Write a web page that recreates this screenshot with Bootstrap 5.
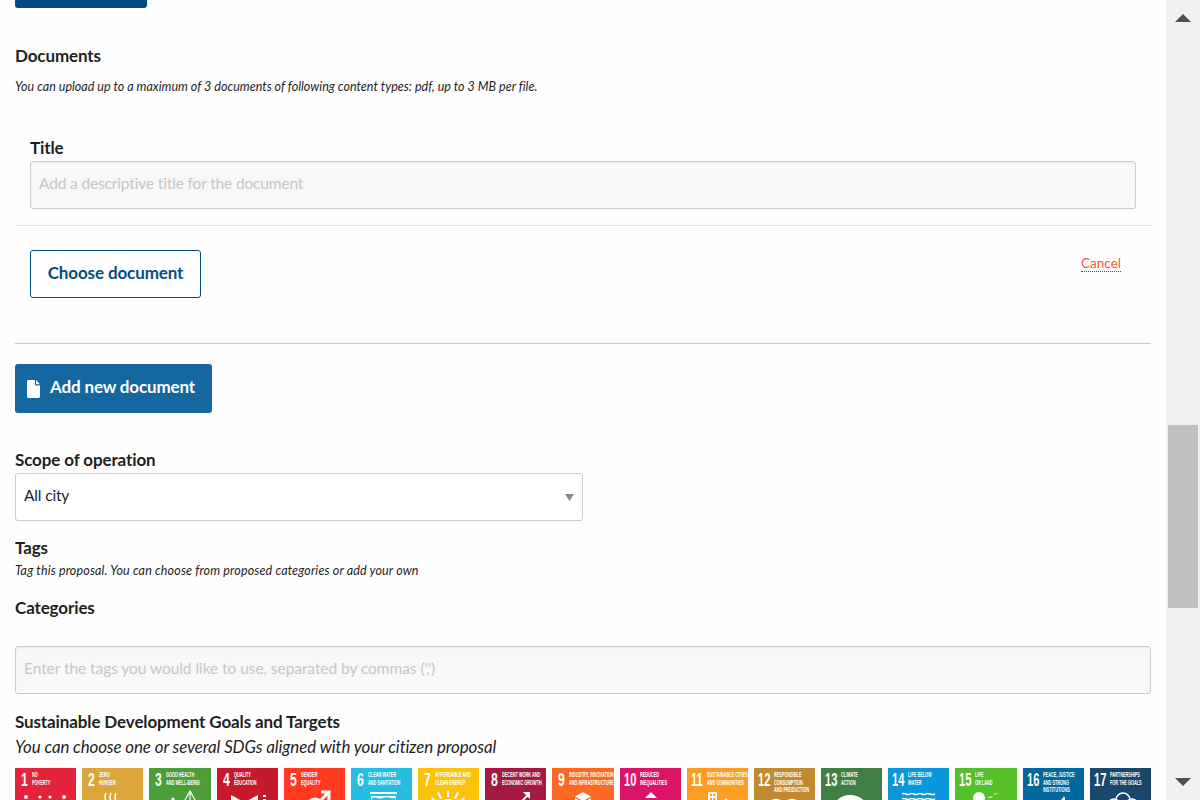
<!DOCTYPE html>
<html lang="en">
<head>
<meta charset="utf-8">
<title>New proposal</title>
<link href="https://cdn.jsdelivr.net/npm/bootstrap@5.3.0/dist/css/bootstrap.min.css" rel="stylesheet">
<script src="https://cdn.jsdelivr.net/npm/bootstrap@5.3.0/dist/js/bootstrap.bundle.min.js"></script>
<style>
html,body{height:800px;overflow:hidden}
body{background:#fefefe;color:#1f1f1f;font-family:Lato,"Liberation Sans",sans-serif;font-size:16px}
.shell{height:800px;overflow:hidden}
.pagecol{width:1166px;padding:0 15px;overflow:hidden;flex:none}
.cutbtn{width:132px;height:8px;background:#004a83;border-radius:0 0 3px 3px}
.flabel{display:block;font-weight:700;font-size:17px;line-height:24px;margin:0;letter-spacing:-.12px}
.hint{font-style:italic;font-size:12.5px;line-height:20px;margin:0;letter-spacing:.02px}
.hint.tagshint{letter-spacing:.15px;padding-top:1px;margin-bottom:-1px}
.docname{margin-top:36px}
.hintdoc{margin-top:9px;margin-bottom:-1px}
.docgroup{padding:0 15px;margin-top:40px}
.field{height:48px;border:1px solid #ccc;border-radius:3px;background:#f8f8f8;box-shadow:inset 0 1px 2px rgba(0,0,0,.06);padding:0 8px 5px;font-size:15.5px;color:#222;letter-spacing:-.15px;margin-top:1px;font-family:inherit}
.field::placeholder{color:#c6c6c6;opacity:1}
.field:focus{background:#f8f8f8;border-color:#ccc;box-shadow:none}
.catfield.field{letter-spacing:-.06px}
.rule1{margin:16px 0 0;border:0;border-top:1px solid #e2e2e2;opacity:1}
.rule2{margin:45px 0 0;border:0;border-top:1px solid #cacaca;opacity:1}
.docactions{padding:24px 30px 0 15px}
.btn-outline-doc{height:48px;width:171px;border:1px solid #004f80;border-radius:3px;color:#004f80;background:#fff;font-weight:700;font-size:17px;padding:0 0 2px;letter-spacing:-.12px}
.cancel-link{font-size:13.5px;line-height:16px;color:#f4553c;text-decoration:none;border-bottom:1px dotted #f00;margin-top:5px}
.btn-adddoc{height:49px;width:197px;background:#14679f;color:#fff;border:0;border-radius:3px;font-weight:700;font-size:17px;padding:0 0 0 12px;margin-top:20px;gap:10px;letter-spacing:-.15px}
.btn-adddoc:hover{background:#14679f;color:#fff}
.addtext{padding-bottom:4px}
.scopelabel{margin-top:35px}
.scopesel{width:568px;height:48px;margin-top:1px;border:1px solid #ccc;border-radius:3px;background-color:#fff;padding:0 8px 2px;font-size:15.5px;letter-spacing:-.15px;color:#222;font-family:inherit;background-image:url("data:image/svg+xml,%3Csvg xmlns='http://www.w3.org/2000/svg' width='9' height='7'%3E%3Cpath d='M0 0h9L4.500 7z' fill='%23888'/%3E%3C/svg%3E");background-size:9px 7px;background-position:right 8px center}
.tagslabel{margin-top:15px}
.catlabel{margin-top:16px}
.catfield{margin-top:26px}
.sdglabel{margin-top:16px}
.sdghint{font-style:italic;font-size:16.9px;line-height:24px;margin:1px 0 0;letter-spacing:-.1px}
.sdggrid{display:grid;grid-template-columns:repeat(17,1fr);column-gap:6px;margin-top:9px}
.sdgtile{height:62px;color:#fff;overflow:hidden}
.sdgtop{height:22px;display:flex;padding:2px 0 0 4px;font-family:"Liberation Sans",sans-serif}
.sdgnum{font-size:18px;line-height:20px;font-weight:700;transform:scaleX(.68);transform-origin:left;width:11px;margin-left:2px;flex:none}
.sdgnum.two{width:16px;margin-left:0;transform:scaleX(.62)}
.sdgcap{font-size:7px;line-height:7.5px;font-weight:700;text-transform:uppercase;padding-top:1px;white-space:nowrap;transform:scaleX(.55);transform-origin:left;width:40px;flex:none}
.sdgico{display:block;width:61px;height:40px}
.sbar{width:34px;background:#f0f0f0;flex:none;padding-top:14px}
.sarrow{width:16px;height:8px;margin-left:9px;display:block;fill:#505050}
.sthumb{width:30px;height:183px;background:#c1c1c1;margin:403px 0 0 2px}
.sarrow.lower{margin-top:170px}
</style>
</head>
<body>
<div class="shell d-flex">
  <main class="pagecol">
    <div class="cutbtn"></div>
    <label class="flabel docname">Documents</label>
    <p class="hint hintdoc">You can upload up to a maximum of 3 documents of following content types: pdf, up to 3 MB per file.</p>
    <div class="docgroup">
      <label class="flabel" for="doctitle">Title</label>
      <input id="doctitle" class="form-control field" placeholder="Add a descriptive title for the document">
    </div>
    <hr class="rule1">
    <div class="docactions d-flex justify-content-between align-items-start">
      <button class="btn btn-outline-doc" type="button">Choose document</button>
      <a class="cancel-link" href="#">Cancel</a>
    </div>
    <hr class="rule2">
    <button class="btn btn-adddoc d-flex align-items-center" type="button">
      <svg width="13" height="18" viewBox="0 0 13 18" aria-hidden="true"><path d="M0 1.500C0 .7.7 0 1.500 0H8v4.500c0 .6.4 1 1 1h4V16.500c0 .8-.7 1.500-1.500 1.500h-10C.7 18 0 17.300 0 16.500zM9 0l4 4.300H9z" fill="#fff"/></svg>
      <span class="addtext">Add new document</span>
    </button>
    <label class="flabel scopelabel" for="scope">Scope of operation</label>
    <select id="scope" class="form-select scopesel"><option>All city</option></select>
    <label class="flabel tagslabel">Tags</label>
    <p class="hint tagshint">Tag this proposal. You can choose from proposed categories or add your own</p>
    <label class="flabel catlabel">Categories</label>
    <input class="form-control field catfield" placeholder="Enter the tags you would like to use, separated by commas (',')">
    <label class="flabel sdglabel">Sustainable Development Goals and Targets</label>
    <p class="sdghint">You can choose one or several SDGs aligned with your citizen proposal</p>
    <div class="sdggrid">
      <div class="sdgtile" style="background:#e5243b"><div class="sdgtop"><span class="sdgnum">1</span><span class="sdgcap">No<br>poverty</span></div><svg class="sdgico" viewBox="0 0 61 40" fill="#fff"><circle cx="11" cy="7" r="2"/><circle cx="25" cy="7" r="1.600"/><circle cx="35" cy="7" r="1.600"/><circle cx="49" cy="7" r="2"/><path d="M8 10h6v8H8zM23 10h4v8h-4zM33 10h4v8h-4zM46 10h6v8h-6z"/></svg></div>
      <div class="sdgtile" style="background:#dda63a"><div class="sdgtop"><span class="sdgnum">2</span><span class="sdgcap">Zero<br>hunger</span></div><svg class="sdgico" viewBox="0 0 61 40" fill="none" stroke="#fff" stroke-width="1.500"><path d="M24 3c-2 4-1 7 1 10M29 3c-2 4-1 7 1 10M34 3c-2 4-1 7 1 10"/></svg></div>
      <div class="sdgtile" style="background:#4c9f38"><div class="sdgtop"><span class="sdgnum">3</span><span class="sdgcap">Good health<br>and well-being</span></div><svg class="sdgico" viewBox="0 0 61 40" fill="none" stroke="#fff" stroke-width="1.200"><path d="M36 10l5-9 5 9"/><path d="M41 1v12"/><circle cx="24" cy="9" r="1" fill="#fff"/></svg></div>
      <div class="sdgtile" style="background:#c5192d"><div class="sdgtop"><span class="sdgnum">4</span><span class="sdgcap">Quality<br>education</span></div><svg class="sdgico" viewBox="0 0 61 40" fill="#fff"><path d="M14 5l13 7V18H14zM41 5l-13 7V18H41z"/><path d="M46 5h3v2h-3zM46 9h3v9h-3z"/></svg></div>
      <div class="sdgtile" style="background:#ff3a21"><div class="sdgtop"><span class="sdgnum">5</span><span class="sdgcap">Gender<br>equality</span></div><svg class="sdgico" viewBox="0 0 61 40" fill="none" stroke="#fff" stroke-width="3"><circle cx="31" cy="17" r="8"/><path d="M36 11l8-8M37 2h8v8"/></svg></div>
      <div class="sdgtile" style="background:#26bde2"><div class="sdgtop"><span class="sdgnum">6</span><span class="sdgcap">Clean water<br>and sanitation</span></div><svg class="sdgico" viewBox="0 0 61 40" fill="#fff"><path d="M19 2h27v2H19zM20 6h25l-2 12H22z" opacity=".95"/><path d="M21 8c4-2 6 2 11 0s7 1 12 0v2H21z" fill="#26bde2"/></svg></div>
      <div class="sdgtile" style="background:#fcc30b"><div class="sdgtop"><span class="sdgnum">7</span><span class="sdgcap">Affordable and<br>clean energy</span></div><svg class="sdgico" viewBox="0 0 61 40" fill="#fff"><circle cx="30" cy="18" r="9"/><path d="M29 1h2v6h-2zM19 3l2-1 3 6-2 1zM41 3l-2-1-3 6 2 1zM13 9l1-2 5 4-1 1zM47 9l-1-2-5 4 1 1z"/></svg></div>
      <div class="sdgtile" style="background:#a21942"><div class="sdgtop"><span class="sdgnum">8</span><span class="sdgcap">Decent work and<br>economic growth</span></div><svg class="sdgico" viewBox="0 0 61 40" fill="none" stroke="#fff" stroke-width="2"><path d="M26 18l6-6 2 2 10-10"/><path d="M38 2h7v7" fill="#fff" stroke="none"/></svg></div>
      <div class="sdgtile" style="background:#fd6925"><div class="sdgtop"><span class="sdgnum">9</span><span class="sdgcap">Industry, innovation<br>and infrastructure</span></div><svg class="sdgico" viewBox="0 0 61 40" fill="#fff"><path d="M31 2l8 4.500-8 4.500-8-4.500zM23 8l7 4v6h-7zM39 8l-7 4v6h7z"/></svg></div>
      <div class="sdgtile" style="background:#dd1367"><div class="sdgtop"><span class="sdgnum two">10</span><span class="sdgcap">Reduced<br>inequalities</span></div><svg class="sdgico" viewBox="0 0 61 40" fill="#fff"><path d="M31 2l6 6H25z"/></svg></div>
      <div class="sdgtile" style="background:#fd9d24"><div class="sdgtop"><span class="sdgnum two">11</span><span class="sdgcap">Sustainable cities<br>and communities</span></div><svg class="sdgico" viewBox="0 0 61 40" fill="#fff"><path fill-rule="evenodd" d="M21 2h9v16h-9zM23 4v2h2V4zM26 4v2h2V4zM23 8v2h2V8zM26 8v2h2V8z"/><path d="M39 8l3 3v7h-6v-7z"/></svg></div>
      <div class="sdgtile" style="background:#bf8b2e"><div class="sdgtop"><span class="sdgnum two">12</span><span class="sdgcap">Responsible<br>consumption<br>and production</span></div><svg class="sdgico" viewBox="0 0 61 40" fill="none" stroke="#fff" stroke-width="2.500"><circle cx="22" cy="17" r="7"/><circle cx="38" cy="17" r="7"/></svg></div>
      <div class="sdgtile" style="background:#3f7e44"><div class="sdgtop"><span class="sdgnum two">13</span><span class="sdgcap">Climate<br>action</span></div><svg class="sdgico" viewBox="0 0 61 40" fill="#fff"><path d="M13 14C20 2 38 2 46 14c-8-5-25-5-33 0z"/></svg></div>
      <div class="sdgtile" style="background:#0a97d9"><div class="sdgtop"><span class="sdgnum two">14</span><span class="sdgcap">Life below<br>water</span></div><svg class="sdgico" viewBox="0 0 61 40" fill="none" stroke="#fff" stroke-width="1.500"><path d="M14 4c3-2 5 2 8 0s5 2 8 0 5 2 8 0 5 2 9 0M14 9c3-2 5 2 8 0s5 2 8 0 5 2 8 0 5 2 9 0"/></svg></div>
      <div class="sdgtile" style="background:#56c02b"><div class="sdgtop"><span class="sdgnum two">15</span><span class="sdgcap">Life<br>on land</span></div><svg class="sdgico" viewBox="0 0 61 40" fill="#fff"><circle cx="24" cy="8" r="6"/><ellipse cx="21" cy="14" rx="5" ry="4"/><ellipse cx="28" cy="14" rx="5" ry="4"/><path d="M32 7c2 0 4-1 6 0-2 1-4 1-6 0zM38 4c1 0 3-1 5-1-1 1-3 2-5 1z"/></svg></div>
      <div class="sdgtile" style="background:#00689d"><div class="sdgtop"><span class="sdgnum two">16</span><span class="sdgcap">Peace, justice<br>and strong<br>institutions</span></div><svg class="sdgico" viewBox="0 0 61 40" fill="#fff"><path d="M38 10l2-2 1-2 1 2v4l-3 1z"/></svg></div>
      <div class="sdgtile" style="background:#19486a"><div class="sdgtop"><span class="sdgnum two">17</span><span class="sdgcap">Partnerships<br>for the goals</span></div><svg class="sdgico" viewBox="0 0 61 40" fill="none" stroke="#fff" stroke-width="1.500"><circle cx="33" cy="10" r="7"/><circle cx="24" cy="15" r="6"/><circle cx="42" cy="15" r="6"/></svg></div>
    </div>
  </main>
  <div class="sbar">
    <svg class="sarrow" viewBox="0 0 16 8"><path d="M8 0l8 8H0z"/></svg>
    <div class="sthumb"></div>
    <svg class="sarrow lower" viewBox="0 0 16 8"><path d="M0 0h16l-8 8z"/></svg>
  </div>
</div>
</body>
</html>
